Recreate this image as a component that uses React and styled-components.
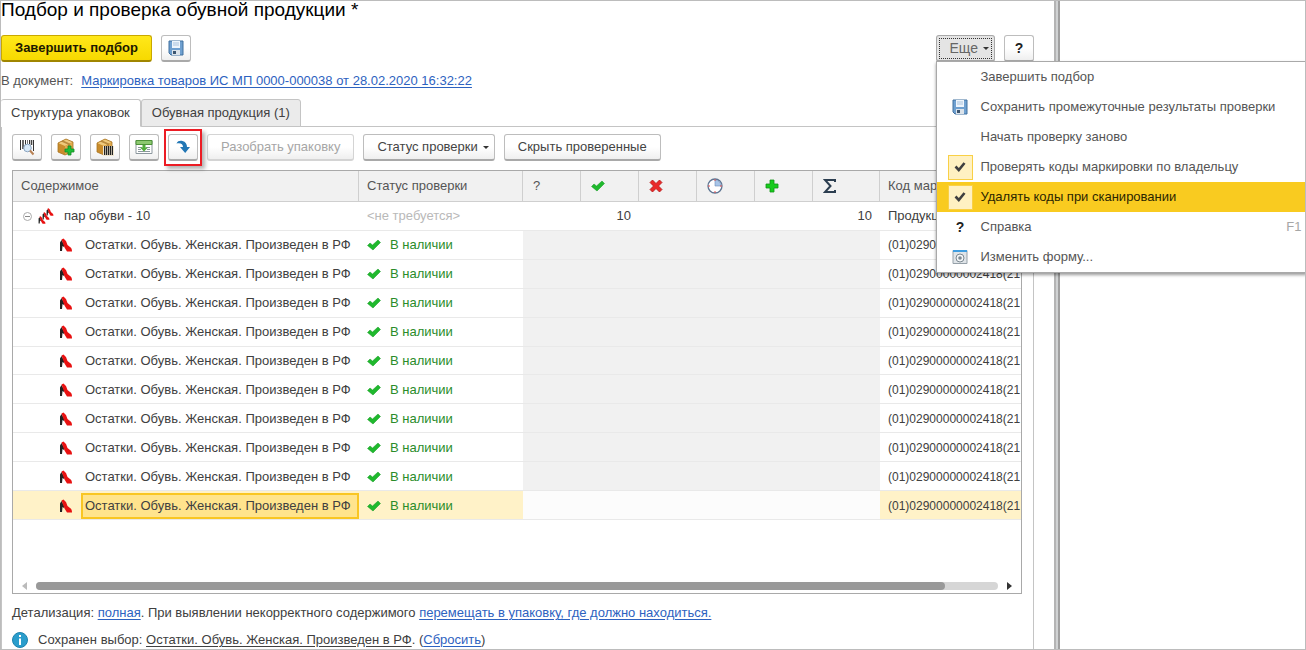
import React from "react";
import styled, { createGlobalStyle, css } from "styled-components";

const GlobalStyle = createGlobalStyle`
  * {
    box-sizing: border-box;
  }

  body {
    margin: 0;
    background: #fff;
    color: #404040;
    font-family: "Liberation Sans", Arial, sans-serif;
    font-size: 13px;
    line-height: 16px;
  }

  button, input {
    font: inherit;
    color: inherit;
    margin: 0;
  }
`;

const Page = styled.div`
  display: flex;
  min-height: 100vh;
  border: 1px solid #bcbcbc;
  overflow: hidden;
`;

const Main = styled.main`
  flex: 1;
  min-width: 0;
`;

const Splitter = styled.div`
  width: 6px;
  border-left: 2px solid #b4b4b4;
  border-right: 2px solid #a0a0a0;
  background: #d0d2d3;
`;

const Side = styled.aside`
  flex: 0 0 245px;
  background: #fff;
`;

const Title = styled.h1`
  margin: 0;
  height: 34px;
  color: #000;
  font-size: 19px;
  font-weight: 400;
  line-height: 18px;
`;

const CommandBar = styled.div`
  display: flex;
  gap: 9px;
  padding-right: 20px;
`;

const Spacer = styled.div`
  flex: 1;
`;

const Button = styled.button`
  display: flex;
  align-items: center;
  justify-content: center;
  gap: 5px;
  height: 27px;
  padding: 0 ${(props) => (props.$icon ? "0" : "13px")};
  padding-right: ${(props) => props.$dropdown && "5px"};
  width: ${(props) => (props.$icon ? "30px" : "auto")};
  border: 1px solid #bdbdbd;
  border-bottom: 2px solid #a9a9a9;
  border-radius: 3px;
  background: linear-gradient(#fff 50%, #efefef);
  color: #444;
  white-space: nowrap;

  &:disabled {
    border-color: #d4d4d4;
    color: #a6a6a6;
  }

  ${(props) =>
    props.$primary &&
    css`
      border-color: #c9a800;
      border-bottom-color: #a08600;
      background: linear-gradient(#ffe81a, #f7d900);
      color: #1c1800;
      font-weight: 700;
    `}

  ${(props) =>
    props.$pressed &&
    css`
      border-color: #a9a9a9;
      background: #e4e4e4;
      outline: 1px dotted #333;
      outline-offset: -4px;
      color: #666;
      font-size: 14px;
    `}
`;

const Caret = styled.span`
  border: 3px solid transparent;
  border-top-color: #333;
  border-bottom: 0;
`;

const HelpMark = styled.b`
  color: #222;
  font-size: 14px;
`;

const MenuAnchor = styled.div`
  position: relative;
`;

const Menu = styled.div`
  position: absolute;
  z-index: 2;
  top: 26px;
  left: 0;
  width: 371px;
  border: 1px solid #a9a9a9;
  background: #fff;
  box-shadow: 0 2px 3px rgba(0, 0, 0, 0.4);
`;

const MenuItem = styled.label`
  display: flex;
  align-items: center;
  width: 100%;
  height: 30px;
  padding: 0 4px 0 11px;
  border: 0;
  background: ${(props) => (props.$active ? "#f9cb20" : "#fff")};
  color: ${(props) => (props.$active ? "#2b2500" : "#555")};
  text-align: left;
`;

const MenuIcon = styled.span`
  display: flex;
  align-items: center;
  justify-content: center;
  width: 25px;
  height: 25px;
  margin-right: 8px;
`;

const CheckBox = styled.input`
  appearance: none;
  width: 25px;
  height: 25px;
  margin-right: 8px;
  border: 1px solid #f9d046;
  background: #fff1c2
    url("data:image/svg+xml,%3Csvg xmlns='http://www.w3.org/2000/svg' viewBox='0 0 12 12'%3E%3Cpath d='M1.500 5.500 4.800 9 10.500 2' fill='none' stroke='%23404040' stroke-width='2.600'/%3E%3C/svg%3E")
    center / 12px no-repeat;
`;

const Shortcut = styled.span`
  margin-left: auto;
  color: #a6a6a6;
`;

const DocLine = styled.div`
  padding: 11px 0 10px;
  color: #555;
`;

const Link = styled.a`
  color: ${(props) => (props.$plain ? "#404040" : "#2d62c0")};
  text-underline-offset: 2px;
`;

const DocLink = styled(Link)`
  margin-left: 8px;
`;

const Tabs = styled.div`
  display: flex;
  height: 28px;
  margin-right: 20px;
  border-bottom: 1px solid #c4c4c4;
`;

const Tab = styled.button`
  height: 28px;
  padding: 0 10px;
  border: 1px solid #c4c4c4;
  border-left-width: ${(props) => (props.$active ? "0" : "1px")};
  border-bottom-color: ${(props) => (props.$active ? "#fff" : "#c4c4c4")};
  border-radius: 3px 3px 0 0;
  background: ${(props) => (props.$active ? "#fff" : "#ebebeb")};
`;

const Panel = styled.section`
  margin-right: 20px;
  padding: 7px 11px 0 10px;
  border-left: 1px solid #c4c4c4;
  border-right: 1px solid #c4c4c4;
  min-height: 522px;
`;

const Toolbar = styled.div`
  display: flex;
  gap: 9px;
  margin-bottom: 9px;
`;

const Highlighted = styled.div`
  position: relative;

  &::after {
    content: "";
    position: absolute;
    inset: -5px -4px;
    border: 2px solid #ec1c24;
    box-shadow: 3px 3px 4px rgba(0, 0, 0, 0.3);
    pointer-events: none;
  }
`;

const Grid = styled.div`
  display: flex;
  flex-direction: column;
  height: 424px;
  border: 1px solid #a9a9a9;
  overflow: hidden;
`;

const Table = styled.table`
  width: 100%;
  height: 349px;
  border-collapse: separate;
  border-spacing: 0;
  table-layout: fixed;
`;

const Th = styled.th`
  width: ${(props) => props.$width || "auto"};
  height: 31px;
  padding: 0 ${(props) => (props.$narrow ? "10px" : "8px")};
  border-right: 1px solid #cfcfcf;
  border-bottom: 1px solid #cfcfcf;
  background: #f1f1f1;
  color: #555;
  font-weight: 400;
  text-align: left;
  white-space: nowrap;

  &:last-child {
    border-right: 0;
  }

  svg {
    display: block;
  }
`;

const Td = styled.td`
  padding: 1px 8px 0;
  border-bottom: 1px solid #e9e9e9;
  background: ${(props) => props.$bg || "#fff"};
  text-align: ${(props) => (props.$number ? "right" : "left")};
  white-space: nowrap;
`;

const CodeTd = styled(Td)`
  padding-right: 0;
  font-size: 12px;
`;

const Muted = styled.span`
  color: #b9b9b9;
`;

const RowLabel = styled.div`
  display: flex;
  align-items: center;
  gap: ${(props) => (props.$group ? "6px" : "8px")};
  margin-right: -8px;
  padding-left: ${(props) => (props.$group ? "2px" : "38px")};
`;

const Toggle = styled.button`
  display: flex;
  padding: 0;
  border: 0;
  background: none;
`;

const ItemName = styled.span`
  flex: 1;
  padding: 3px 2px;
  border: 2px solid ${(props) => (props.$selected ? "#f9c623" : "transparent")};
  background: ${(props) => (props.$selected ? "#ffe48d" : "none")};
`;

const Status = styled.span`
  display: flex;
  align-items: center;
  gap: 9px;
  color: #2a8c2a;
`;

const ScrollBar = styled.div`
  display: flex;
  align-items: center;
  gap: 9px;
  margin-top: auto;
  padding: 0 8px 3px;
`;

const ScrollArrow = styled.button`
  width: 6px;
  height: 8px;
  padding: 0;
  border: 4px solid transparent;
  border-width: 4px ${(props) => (props.$left ? "5px 4px 0" : "0 4px 5px")};
  border-left-color: ${(props) => (props.$left ? "transparent" : "#333")};
  border-right-color: ${(props) => (props.$left ? "#bbb" : "transparent")};
  background: none;
`;

const Track = styled.div`
  flex: 1;
  height: 8px;
  border-radius: 4px;
  background: #d6d6d6;
`;

const Thumb = styled.div`
  width: 94.5%;
  height: 8px;
  border-radius: 4px;
  background: #999;
`;

const Details = styled.p`
  margin: 11px 0;
`;

const Note = styled.p`
  display: flex;
  align-items: center;
  gap: 10px;
  margin: 0;
`;

const SaveIcon = () => (
  <svg width="16" height="16" viewBox="0 0 16 16">
    <path d="M1 1h14v14H3l-2-2z" fill="#6fa0d0" stroke="#41709f" />
    <path d="M4 1h8v7H4z" fill="#eef5fc" />
    <path d="M5 3h6M5 5h6" stroke="#a9c2dc" />
    <path d="M4 10h8v5H4z" fill="#dce3ea" />
    <path d="M5 11h3v3H5z" fill="#3c5570" />
  </svg>
);

const BarcodeSearchIcon = () => (
  <svg width="18" height="18" viewBox="0 0 18 18">
    <path d="M2.500 2v10M7.500 2v5M11.500 2v4M15.500 2v11" stroke="#333" />
    <path d="M5 2v9M13.500 2v5" stroke="#444" strokeWidth="1.600" />
    <path d="M9.500 2v4" stroke="#777" />
    <circle cx="9.500" cy="10" r="3.800" fill="#d7e9f8" stroke="#8aa4c0" />
    <path d="m12 12.500 3.500 4" stroke="#b98255" strokeWidth="2" />
  </svg>
);

const BoxShape = () => (
  <>
    <path d="m1 5 8-4 7 3v9l-8 4-7-3z" fill="#c98c2b" />
    <path d="m1 5 8-4 7 3-8 4z" fill="#efc97b" />
    <path d="m8 8 8-4v9l-8 4z" fill="#e0aa4c" />
    <path d="m4 3.500 7 3v3l2-1v-3l-7-3z" fill="#b98a3e" />
    <path d="m1 5 8-4 7 3v9l-8 4-7-3z" fill="none" stroke="#a87322" strokeWidth=".8" />
  </>
);

const BoxPlusIcon = () => (
  <svg width="18" height="18" viewBox="0 0 18 18">
    <BoxShape />
    <path d="M11 8h3v3h3v3h-3v3h-3v-3H8v-3h3z" fill="#1fbd35" stroke="#128a25" strokeWidth=".8" />
  </svg>
);

const BoxBarcodeIcon = () => (
  <svg width="18" height="18" viewBox="0 0 18 18">
    <BoxShape />
    <path d="M7 8h11v10H7z" fill="#f0e6d0" />
    <path d="M8.500 8v9M12.500 8v9M16.500 8v9" stroke="#222" />
    <path d="M10.500 8v9M14.500 8v9" stroke="#222" strokeWidth="1.600" />
  </svg>
);

const LoadTableIcon = () => (
  <svg width="18" height="16" viewBox="0 0 18 16">
    <path d="M1 1.500h16v13H1z" fill="#fff" stroke="#8c979e" />
    <path d="M1 1.500h16v4H1z" fill="#8cc870" stroke="#4d9138" />
    <path d="M3 8.500h4m4 0h4M3 10.500h3m6 0h3M3 12.500h12" stroke="#8c979e" />
    <path d="M7.500 6h3v2.500H13l-4 4-4-4h2.500z" fill="#53ad3d" />
  </svg>
);

const ArrowIcon = () => (
  <svg width="16" height="16" viewBox="0 0 16 16">
    <path d="M1.500 4.500C2.500 2 5 1.500 7.500 2c3 .7 4.500 3 4.500 6h3l-4.800 6L5 8h3c0-2.500-2-4.500-6.500-3.500z" fill="#2277b5" />
  </svg>
);

const CheckIcon = () => (
  <svg width="14" height="12" viewBox="0 0 14 12">
    <path d="M0.500 6.500 3 4l2.500 2L11 1l2.500 2.500L6 11z" fill="#1fb92d" stroke="#159622" strokeWidth=".5" />
  </svg>
);

const CrossIcon = () => (
  <svg width="14" height="14" viewBox="0 0 14 14">
    <path
      d="m3.500 1 3.500 3.500L10.500 1 13 3.500 9.500 7l3.500 3.500-2.500 2.500L7 9.500 3.500 13 1 10.500 4.500 7 1 3.500z"
      fill="#ea2a2a"
      stroke="#b31616"
      strokeWidth=".8"
    />
  </svg>
);

const ClockIcon = () => (
  <svg width="16" height="16" viewBox="0 0 16 16">
    <circle cx="8" cy="8" r="7" fill="#fff" stroke="#5d7593" strokeWidth="1.300" />
    <path d="M8 8V2a6 6 0 0 1 6 6z" fill="#a8c5e8" stroke="#6d8fb8" strokeWidth=".6" />
    <path d="M8 1v2M8 13v2M1 8h2M13 8h2" stroke="#e05050" />
  </svg>
);

const PlusIcon = () => (
  <svg width="14" height="14" viewBox="0 0 14 14">
    <path d="M5 1h4v4h4v4H9v4H5V9H1V5h4z" fill="#17cc1c" stroke="#129417" strokeWidth=".8" />
  </svg>
);

const SumIcon = () => (
  <svg width="14" height="16" viewBox="0 0 14 16">
    <path d="M12 4V2H2l5.500 6L2 14h10v-2" fill="none" stroke="#2c3e50" strokeWidth="2" />
  </svg>
);

const Shoe = () => (
  <>
    <path d="M1 4.500 2.500 2 5 6.500V9L3.500 8 3 13H1z" fill="#222" />
    <path d="M2.500 1.500 4.500.5 7 3l1.500 4 2.500 2c1.500.8 2 2.500 2 4.500H8L5.500 9.500z" fill="#e81111" />
  </>
);

const ShoeIcon = () => (
  <svg width="14" height="14" viewBox="0 0 14 14">
    <Shoe />
  </svg>
);

const ShoesIcon = () => (
  <svg width="16" height="16" viewBox="0 0 28 28">
    <g transform="translate(14 0)">
      <Shoe />
    </g>
    <g transform="translate(7 7)">
      <Shoe />
    </g>
    <g transform="translate(0 14)">
      <Shoe />
    </g>
  </svg>
);

const MinusIcon = () => (
  <svg width="9" height="9" viewBox="0 0 9 9">
    <circle cx="4.500" cy="4.500" r="4" fill="#fff" stroke="#aaa" />
    <path d="M2 4.500h5" stroke="#888" />
  </svg>
);

const FormIcon = () => (
  <svg width="16" height="16" viewBox="0 0 16 16">
    <path d="M1 1.500h14v13H1z" fill="#dfe4e8" stroke="#96a1a9" />
    <path d="M1 1h14v2H1z" fill="#3f9de0" />
    <circle cx="8" cy="9" r="4" fill="#f4f6f8" stroke="#7c8991" />
    <circle cx="8" cy="9" r="1.800" fill="#7c8991" />
  </svg>
);

const InfoIcon = () => (
  <svg width="16" height="16" viewBox="0 0 16 16">
    <circle cx="8" cy="8" r="7.500" fill="#2a9dcc" stroke="#1e83ae" />
    <path d="M7 3h2v2H7zM7 6.500h2V13H7z" fill="#fff" />
  </svg>
);

const columns = [
  { title: "Содержимое", width: "346px" },
  { title: "Статус проверки", width: "164px" },
  { title: "?", width: "58px", narrow: true },
  { title: <CheckIcon />, width: "58px", narrow: true },
  { title: <CrossIcon />, width: "58px", narrow: true },
  { title: <ClockIcon />, width: "58px", narrow: true },
  { title: <PlusIcon />, width: "58px", narrow: true },
  { title: <SumIcon />, width: "67px", narrow: true },
  { title: "Код маркировки" },
];

const items = Array.from({ length: 10 }, (_, i) => ({
  id: i,
  name: "Остатки. Обувь. Женская. Произведен в РФ",
  status: "В наличии",
  code: "(01)02900000002418(21",
  selected: i === 9,
}));

const counters = [0, 1, 2, 3, 4, 5];

const ItemRow = ({ item }) => {
  const rowBg = item.selected ? "#fff2c8" : "#fff";
  return (
    <tr>
      <Td $bg={rowBg}>
        <RowLabel>
          <ShoeIcon />
          <ItemName $selected={item.selected}>{item.name}</ItemName>
        </RowLabel>
      </Td>
      <Td $bg={rowBg}>
        <Status>
          <CheckIcon />
          {item.status}
        </Status>
      </Td>
      {counters.map((n) => (
        <Td key={n} $bg={item.selected ? "#fcfcfc" : "#f1f1f1"} />
      ))}
      <CodeTd $bg={rowBg}>{item.code}</CodeTd>
    </tr>
  );
};

const MoreMenu = () => (
  <Menu>
    <MenuItem as="button">
      <MenuIcon />
      Завершить подбор
    </MenuItem>
    <MenuItem as="button">
      <MenuIcon>
        <SaveIcon />
      </MenuIcon>
      Сохранить промежуточные результаты проверки
    </MenuItem>
    <MenuItem as="button">
      <MenuIcon />
      Начать проверку заново
    </MenuItem>
    <MenuItem>
      <CheckBox type="checkbox" defaultChecked />
      Проверять коды маркировки по владельцу
    </MenuItem>
    <MenuItem $active>
      <CheckBox type="checkbox" defaultChecked />
      Удалять коды при сканировании
    </MenuItem>
    <MenuItem as="button">
      <MenuIcon>
        <HelpMark>?</HelpMark>
      </MenuIcon>
      Справка
      <Shortcut>F1</Shortcut>
    </MenuItem>
    <MenuItem as="button">
      <MenuIcon>
        <FormIcon />
      </MenuIcon>
      Изменить форму...
    </MenuItem>
  </Menu>
);

const App = () => {
  return (
    <>
      <GlobalStyle />
      <Page>
        <Main>
          <Title>Подбор и проверка обувной продукции *</Title>
          <CommandBar>
            <Button $primary>Завершить подбор</Button>
            <Button $icon aria-label="Сохранить">
              <SaveIcon />
            </Button>
            <Spacer />
            <MenuAnchor>
              <Button $pressed $dropdown>
                Еще <Caret />
              </Button>
              <MoreMenu />
            </MenuAnchor>
            <Button $icon>
              <HelpMark>?</HelpMark>
            </Button>
          </CommandBar>
          <DocLine>
            В документ:
            <DocLink href="#doc">
              Маркировка товаров ИС МП 0000-000038 от 28.02.2020 16:32:22
            </DocLink>
          </DocLine>
          <Tabs>
            <Tab $active>Структура упаковок</Tab>
            <Tab>Обувная продукция (1)</Tab>
          </Tabs>
          <Panel>
            <Toolbar>
              <Button $icon aria-label="Поиск по штрихкоду">
                <BarcodeSearchIcon />
              </Button>
              <Button $icon aria-label="Добавить упаковку">
                <BoxPlusIcon />
              </Button>
              <Button $icon aria-label="Штрихкод упаковки">
                <BoxBarcodeIcon />
              </Button>
              <Button $icon aria-label="Загрузить">
                <LoadTableIcon />
              </Button>
              <Highlighted>
                <Button $icon aria-label="Удалять при сканировании">
                  <ArrowIcon />
                </Button>
              </Highlighted>
              <Button disabled>Разобрать упаковку</Button>
              <Button $dropdown>
                Статус проверки <Caret />
              </Button>
              <Button>Скрыть проверенные</Button>
            </Toolbar>
            <Grid>
              <Table>
                <thead>
                  <tr>
                    {columns.map((column, i) => (
                      <Th key={i} $width={column.width} $narrow={column.narrow}>
                        {column.title}
                      </Th>
                    ))}
                  </tr>
                </thead>
                <tbody>
                  <tr>
                    <Td>
                      <RowLabel $group>
                        <Toggle aria-label="Свернуть">
                          <MinusIcon />
                        </Toggle>
                        <ShoesIcon />
                        <ItemName>пар обуви - 10</ItemName>
                      </RowLabel>
                    </Td>
                    <Td>
                      <Muted>&lt;не требуется&gt;</Muted>
                    </Td>
                    <Td />
                    <Td $number>10</Td>
                    <Td />
                    <Td />
                    <Td />
                    <Td $number>10</Td>
                    <Td>Продукция</Td>
                  </tr>
                  {items.map((item) => (
                    <ItemRow key={item.id} item={item} />
                  ))}
                </tbody>
              </Table>
              <ScrollBar>
                <ScrollArrow $left aria-label="Влево" />
                <Track>
                  <Thumb />
                </Track>
                <ScrollArrow aria-label="Вправо" />
              </ScrollBar>
            </Grid>
            <Details>
              Детализация: <Link href="#full">полная</Link>. При выявлении некорректного содержимого{" "}
              <Link href="#move">перемещать в упаковку, где должно находиться.</Link>
            </Details>
            <Note>
              <InfoIcon />
              <span>
                Сохранен выбор:{" "}
                <Link $plain href="#item">
                  Остатки. Обувь. Женская. Произведен в РФ
                </Link>
                . (<Link href="#reset">Сбросить</Link>)
              </span>
            </Note>
          </Panel>
        </Main>
        <Splitter />
        <Side />
      </Page>
    </>
  );
};

export default App;
